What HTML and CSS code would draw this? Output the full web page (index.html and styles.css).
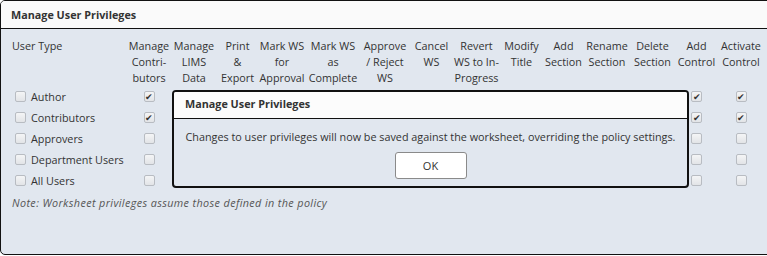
FILE: index.html
```html
<!DOCTYPE html>
<html lang="en">
<head>
    <meta charset="UTF-8">
    <title>Manage User Privileges</title>
    <link rel="stylesheet" href="styles.css">
</head>
<body>
<div class="panel">
    <!--标题-->
    <div class="panel-head">Manage User Privileges</div>
    <div class="panel-body">
        <div class="grid">
            <div class="th first">User Type</div>
            <div class="th">Manage<br>Contri-<br>butors</div>
            <div class="th">Manage<br>LIMS<br>Data</div>
            <div class="th">Print<br>&amp;<br>Export</div>
            <div class="th">Mark WS<br>for<br>Approval</div>
            <div class="th">Mark WS<br>as<br>Complete</div>
            <div class="th">Approve<br>/ Reject<br>WS</div>
            <div class="th">Cancel<br>WS</div>
            <div class="th">Revert<br>WS to In-<br>Progress</div>
            <div class="th">Modify<br>Title</div>
            <div class="th">Add<br>Section</div>
            <div class="th">Rename<br>Section</div>
            <div class="th">Delete<br>Section</div>
            <div class="th">Add<br>Control</div>
            <div class="th">Activate<br>Control</div>

            <!--Author-->
            <div class="td first"><span class="cb"></span>Author</div>
            <div class="td"><span class="cb on"></span></div>
            <div class="td"></div><div class="td"></div><div class="td"></div><div class="td"></div>
            <div class="td"></div><div class="td"></div><div class="td"></div><div class="td"></div>
            <div class="td"></div><div class="td"></div><div class="td"></div>
            <div class="td"><span class="cb on"></span></div>
            <div class="td"><span class="cb on"></span></div>

            <!--Contributors-->
            <div class="td first"><span class="cb"></span>Contributors</div>
            <div class="td"><span class="cb on"></span></div>
            <div class="td"></div><div class="td"></div><div class="td"></div><div class="td"></div>
            <div class="td"></div><div class="td"></div><div class="td"></div><div class="td"></div>
            <div class="td"></div><div class="td"></div><div class="td"></div>
            <div class="td"><span class="cb on"></span></div>
            <div class="td"><span class="cb on"></span></div>

            <!--Approvers-->
            <div class="td first"><span class="cb"></span>Approvers</div>
            <div class="td"><span class="cb"></span></div>
            <div class="td"></div><div class="td"></div><div class="td"></div><div class="td"></div>
            <div class="td"></div><div class="td"></div><div class="td"></div><div class="td"></div>
            <div class="td"></div><div class="td"></div><div class="td"></div>
            <div class="td"><span class="cb"></span></div>
            <div class="td"><span class="cb"></span></div>

            <!--Department Users-->
            <div class="td first"><span class="cb"></span>Department Users</div>
            <div class="td"><span class="cb"></span></div>
            <div class="td"></div><div class="td"></div><div class="td"></div><div class="td"></div>
            <div class="td"></div><div class="td"></div><div class="td"></div><div class="td"></div>
            <div class="td"></div><div class="td"></div><div class="td"></div>
            <div class="td"><span class="cb"></span></div>
            <div class="td"><span class="cb"></span></div>

            <!--All Users-->
            <div class="td first"><span class="cb"></span>All Users</div>
            <div class="td"><span class="cb"></span></div>
            <div class="td"></div><div class="td"></div><div class="td"></div><div class="td"></div>
            <div class="td"></div><div class="td"></div><div class="td"></div><div class="td"></div>
            <div class="td"></div><div class="td"></div><div class="td"></div>
            <div class="td"><span class="cb"></span></div>
            <div class="td"><span class="cb"></span></div>
        </div>
        <p class="note">Note: Worksheet privileges assume those defined in the policy</p>

        <!--弹出框-->
        <div class="dialog">
            <div class="dialog-head">Manage User Privileges</div>
            <div class="dialog-body">
                <p>Changes to user privileges will now be saved against the worksheet, overriding the policy settings.</p>
                <button class="btn">OK</button>
            </div>
        </div>
    </div>
</div>
</body>
</html>
```

FILE: styles.css
```css
*{
    margin: 0;
    padding: 0;
    box-sizing: border-box;
}

body{
    font-family: "Open Sans", "Liberation Sans", sans-serif;
    font-size: 10.8px;
    color: #333;
    background: #fff;
}

.panel{
    width: 780px;
    height: 255px;
    border: 1px solid #111;
    border-radius: 5px;
    background: #e1e7ef;
    overflow: hidden;
}
.panel-head{
    height: 28px;
    line-height: 27px;
    padding-left: 10px;
    font-weight: bold;
    background: #fafafa;
    border-bottom: 1px solid #111;
}
.panel-body{
    position: relative;
    padding: 9px 0 0 11px;
    height: 225px;
}

.grid{
    display: grid;
    grid-template-columns: 115px 44px 46px 41px 48px 54px 50px 43px 47px 43px 41px 46px 45px 43px 46px;
    line-height: 16px;
}
.th{
    text-align: center;
    height: 48px;
    white-space: nowrap;
}
.th.first{
    text-align: left;
}
.td{
    height: 21px;
    display: flex;
    align-items: center;
    justify-content: center;
}
.td.first{
    justify-content: flex-start;
    padding-left: 3px;
}
.td.first .cb{
    margin-right: 5px;
}

/*复选框*/
.cb{
    width: 11px;
    height: 11px;
    border: 1px solid #b8bcc2;
    border-radius: 2px;
    background: linear-gradient(#f4f5f6, #e2e4e7);
    display: flex;
    align-items: center;
    justify-content: center;
    font-size: 9px;
    line-height: 1;
    color: #333;
}
.cb.on::after{
    content: "\2714";
}

.note{
    margin-top: 4px;
    line-height: 16px;
    font-style: italic;
    letter-spacing: 0.38px;
    color: #555;
}

.dialog{
    position: absolute;
    left: 171px;
    top: 61px;
    width: 517px;
    height: 98px;
    border: 2px solid #111;
    border-radius: 4px;
    background: #e1e7ef;
    overflow: hidden;
}
.dialog-head{
    height: 27px;
    line-height: 24px;
    padding-left: 11px;
    font-weight: bold;
    background: #fcfcfc;
    border-bottom: 1px solid #111;
}
.dialog-body{
    display: flex;
    flex-direction: column;
    align-items: center;
    padding-top: 10px;
}
.dialog-body p{
    line-height: 16px;
}
.btn{
    margin-top: 7px;
    width: 72px;
    height: 27px;
    background: #fff;
    border: 1px solid #8a8a8a;
    border-radius: 3px;
    font-family: inherit;
    font-size: 11px;
    color: #333;
}
```
